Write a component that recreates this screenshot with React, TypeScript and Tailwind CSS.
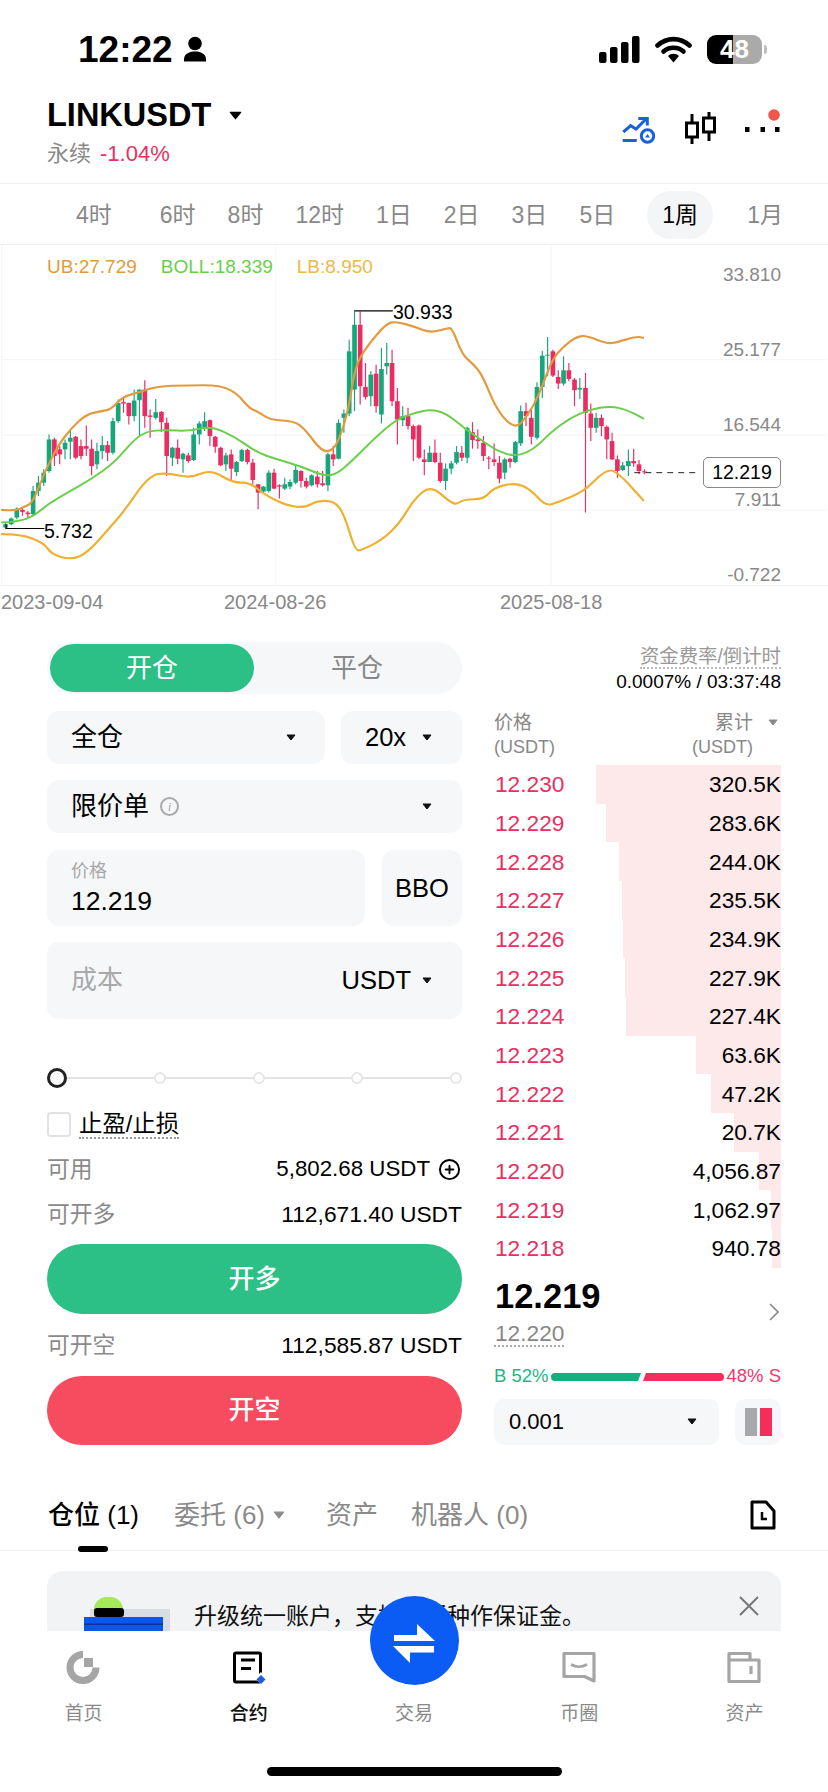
import { CirclePlus } from "lucide-react";

// chart data is in 3x units: x 0-2484, y measured from 240 in the page
type Candle = [number, number, number, number, number, number];

const leftCandles: Candle[] = [
  [13, 850, 870, 855, 865, 1], [30, 835, 858, 838, 855, 1], [47, 805, 840, 808, 835, 1], [64, 805, 830, 812, 818, 0],
  [80, 815, 835, 820, 825, 0], [96, 740, 830, 755, 825, 1], [112, 710, 770, 730, 755, 1], [128, 690, 740, 700, 730, 1],
  [144, 585, 700, 600, 695, 1], [160, 595, 680, 600, 650, 0], [176, 620, 675, 630, 645, 0], [192, 600, 660, 610, 630, 1],
  [208, 575, 660, 595, 607, 1], [224, 590, 660, 592, 655, 0], [240, 600, 660, 620, 650, 0], [256, 558, 650, 620, 628, 0],
  [272, 600, 708, 628, 680, 0], [288, 610, 690, 635, 675, 1], [304, 590, 660, 617, 635, 1], [320, 605, 665, 617, 640, 0],
  [336, 535, 645, 545, 640, 1], [352, 480, 550, 490, 545, 1], [368, 475, 520, 488, 492, 0], [384, 490, 555, 490, 530, 0],
  [400, 450, 545, 483, 530, 1], [416, 450, 590, 450, 482, 1], [432, 422, 565, 450, 530, 0], [448, 510, 595, 528, 532, 0],
  [465, 478, 540, 518, 535, 1], [482, 515, 578, 517, 548, 0], [498, 535, 710, 550, 650, 0], [515, 622, 680, 625, 655, 1],
  [531, 600, 675, 625, 658, 0], [547, 640, 700, 643, 660, 1], [563, 640, 670, 648, 665, 0], [579, 565, 665, 585, 662, 1],
  [596, 545, 615, 552, 585, 1], [612, 518, 575, 545, 568, 1], [628, 540, 620, 542, 590, 0], [644, 590, 640, 592, 622, 0],
  [660, 622, 680, 625, 678, 0], [676, 640, 695, 648, 675, 1], [692, 630, 725, 645, 688, 0], [708, 665, 710, 668, 698, 1],
  [724, 628, 668, 632, 665, 1], [741, 628, 675, 632, 668, 0], [757, 658, 735, 670, 722, 0], [773, 735, 810, 735, 760, 0],
  [789, 740, 760, 742, 757, 1], [805, 693, 760, 700, 755, 1], [821, 688, 750, 700, 748, 0], [837, 735, 778, 738, 742, 0],
  [853, 715, 752, 735, 748, 1], [869, 720, 750, 728, 742, 1], [886, 680, 735, 692, 730, 1], [902, 693, 745, 695, 725, 0],
  [918, 715, 748, 725, 742, 0], [934, 705, 742, 708, 738, 1], [951, 695, 745, 712, 735, 0], [967, 695, 742, 732, 738, 0],
  [983, 640, 755, 645, 738, 1], [999, 620, 680, 645, 660, 0], [1015, 540, 660, 550, 658, 1], [1031, 510, 580, 522, 535, 1],
  [1047, 300, 530, 335, 522, 1], [1063, 215, 515, 255, 450, 1], [1080, 215, 495, 255, 440, 0], [1096, 370, 480, 442, 472, 0],
  [1112, 395, 500, 405, 470, 1], [1128, 375, 520, 402, 500, 0], [1144, 325, 552, 388, 525, 1], [1160, 310, 405, 370, 380, 1],
  [1176, 330, 500, 370, 485, 0], [1192, 445, 615, 485, 540, 0], [1208, 500, 560, 530, 542, 1], [1224, 505, 570, 530, 560, 0],
  [1240, 555, 665, 560, 600, 0],
];

const rightCandles: Candle[] = [
  [15, 555, 660, 558, 655, 0], [31, 630, 708, 660, 668, 0], [47, 620, 668, 640, 668, 1], [63, 600, 672, 640, 668, 0],
  [79, 640, 730, 670, 725, 0], [95, 672, 752, 688, 725, 1], [112, 665, 705, 672, 688, 1], [128, 620, 675, 638, 670, 1],
  [144, 620, 665, 640, 655, 0], [160, 562, 672, 565, 655, 1], [176, 548, 628, 578, 602, 0], [192, 570, 628, 600, 605, 0],
  [209, 590, 665, 610, 650, 0], [225, 650, 690, 655, 658, 0], [241, 612, 680, 660, 668, 0], [257, 650, 732, 670, 718, 0],
  [273, 655, 720, 660, 700, 1], [289, 655, 685, 658, 668, 0], [305, 605, 672, 608, 668, 1], [321, 498, 620, 515, 612, 1],
  [337, 490, 560, 515, 530, 0], [353, 510, 615, 535, 592, 0], [370, 428, 600, 442, 595, 1], [386, 333, 475, 348, 442, 1],
  [402, 292, 410, 345, 348, 1], [418, 330, 412, 335, 408, 0], [434, 392, 448, 412, 432, 0], [450, 350, 438, 392, 432, 1],
  [466, 370, 425, 392, 418, 0], [483, 415, 500, 420, 452, 0], [499, 415, 478, 445, 450, 1], [516, 400, 820, 445, 520, 0],
  [532, 492, 605, 522, 565, 0], [548, 520, 580, 535, 565, 1], [564, 525, 590, 535, 560, 0], [580, 558, 660, 562, 600, 0],
  [596, 580, 662, 605, 660, 0], [612, 648, 715, 660, 695, 0], [628, 668, 695, 678, 692, 1], [645, 630, 710, 665, 680, 1],
  [661, 628, 682, 665, 672, 0], [677, 662, 705, 675, 695, 0], [693, 690, 705, 696, 699, 0],
];

const candles: Candle[] = [...leftCandles, ...rightCandles.map(([x, a, b, c, d, g]) => [x + 1242, a, b, c, d, g] as Candle)];

const shift = (pts: number[][]) => pts.map(([x, y]) => [x + 1242, y]);

// midpoints joined by quadratics, so the bands don't look faceted
const toPath = (pts: number[][]) => {
  let d = `M${pts[0][0]} ${pts[0][1]}`;
  for (let i = 1; i < pts.length - 1; i++) {
    const mx = (pts[i][0] + pts[i + 1][0]) / 2;
    const my = (pts[i][1] + pts[i + 1][1]) / 2;
    d += ` Q${pts[i][0]} ${pts[i][1]} ${mx} ${my}`;
  }
  const last = pts[pts.length - 1];
  return `${d} L${last[0]} ${last[1]}`;
};

const ub = [
  [0, 812], [40, 815], [70, 803], [95, 790], [130, 700], [170, 620], [210, 567], [255, 525], [300, 515], [330, 510],
  [365, 472], [410, 460], [470, 440], [560, 437], [660, 437], [710, 462], [745, 505], [775, 518], [810, 542], [880, 544],
  [915, 570], [965, 638], [1000, 632], [1020, 590], [1045, 510], [1065, 380], [1100, 320], [1160, 250], [1190, 246],
  ...shift([[0, 260], [50, 280], [100, 265], [115, 265], [145, 345], [175, 370], [205, 405], [250, 515], [305, 570], [340, 530],
    [375, 470], [415, 360], [450, 320], [490, 290], [520, 288], [580, 312], [610, 308], [670, 290], [692, 295]]),
];
const boll = [
  [0, 850], [50, 848], [100, 830], [140, 795], [200, 760], [270, 720], [340, 670], [400, 600], [440, 575], [490, 572],
  [570, 575], [630, 560], [700, 590], [770, 640], [830, 660], [900, 680], [970, 710], [1010, 705], [1060, 660], [1130, 590], [1190, 540],
  ...shift([[0, 520], [50, 510], [95, 520], [150, 565], [200, 600], [250, 635], [305, 652], [360, 630], [410, 580], [470, 535],
    [530, 510], [590, 500], [640, 510], [692, 538]]),
];
const lb = [
  [0, 885], [60, 885], [130, 912], [150, 945], [210, 962], [260, 942], [340, 850], [370, 815], [445, 708], [500, 700],
  [570, 717], [630, 690], [695, 730], [750, 730], [790, 765], [860, 800], [915, 805], [950, 785], [1000, 785], [1030, 820],
  [1065, 935], [1085, 933], [1150, 900], [1200, 850],
  ...shift([[0, 780], [50, 738], [110, 790], [130, 795], [150, 780], [210, 780], [240, 745], [305, 730], [350, 750], [395, 800],
    [430, 790], [510, 758], [575, 692], [610, 695], [692, 785]]),
];

const timeframes = ["4时", "6时", "8时", "12时", "1日", "2日", "3日", "5日", "1周", "1月"];

const book = [
  { price: "12.230", total: "320.5K", left: 596 },
  { price: "12.229", total: "283.6K", left: 606 },
  { price: "12.228", total: "244.0K", left: 619 },
  { price: "12.227", total: "235.5K", left: 622 },
  { price: "12.226", total: "234.9K", left: 623 },
  { price: "12.225", total: "227.9K", left: 625 },
  { price: "12.224", total: "227.4K", left: 626 },
  { price: "12.223", total: "63.6K", left: 696 },
  { price: "12.222", total: "47.2K", left: 711 },
  { price: "12.221", total: "20.7K", left: 734 },
  { price: "12.220", total: "4,056.87", left: 759 },
  { price: "12.219", total: "1,062.97", left: 771 },
  { price: "12.218", total: "940.78", left: 772 },
];

function Caret({ color = "#111", w = 10, h = 7 }: { color?: string; w?: number; h?: number }) {
  return (
    <svg width={w} height={h} viewBox="0 0 10 7" className="shrink-0">
      <path d="M1 1 H9 L5 6 Z" fill={color} stroke={color} strokeWidth="1" strokeLinejoin="round" />
    </svg>
  );
}

function StatusBar() {
  return (
    <div className="flex h-[98px] items-center pl-[78px] pr-[66px]">
      <span className="text-[37px] font-bold leading-none text-black">12:22</span>
      <svg width="24" height="26" viewBox="0 0 24 26" className="ml-[10px]">
        <circle cx="12" cy="7.5" r="6.8" fill="#000" />
        <path d="M1 25.5 C0 18 6 15.5 12 15.5 C18 15.5 24 18 23 25.5 Z" fill="#000" />
      </svg>
      <div className="ml-auto flex items-center">
        <svg width="41" height="27" viewBox="0 0 41 27">
          <rect x="0" y="16" width="7.5" height="11" rx="2" fill="#000" />
          <rect x="11" y="11" width="7.5" height="16" rx="2" fill="#000" />
          <rect x="22" y="6" width="7.5" height="21" rx="2" fill="#000" />
          <rect x="33" y="0" width="7.5" height="27" rx="2" fill="#000" />
        </svg>
        <svg width="37" height="27" viewBox="0 0 37 27" className="ml-[15px]">
          <path d="M2.5 9.5 C12 1 25 1 34.5 9.5" fill="none" stroke="#000" strokeWidth="4.6" strokeLinecap="round" />
          <path d="M8.5 15.5 C14 10.5 23 10.5 28.5 15.5" fill="none" stroke="#000" strokeWidth="4.6" strokeLinecap="round" />
          <path d="M13 20 C16 17 21 17 24 20 L18.5 26.5 Z" fill="#000" />
        </svg>
        <div className="relative ml-[15px] flex h-[29px] w-[55px] items-center justify-center rounded-[9px] bg-[linear-gradient(90deg,#000_47%,#aaa_47%)]">
          <span className="text-[26px] font-bold leading-none text-white">48</span>
          <span className="absolute -right-[5px] top-[10px] h-[9px] w-[3px] rounded-r-full bg-[#bbb]" />
        </div>
      </div>
    </div>
  );
}

function Header() {
  return (
    <div className="flex h-[86px] items-start justify-between border-b border-[#f1f1f1] pl-[47px] pr-[46px]">
      <div>
        <div className="flex h-[34px] items-center">
          <span className="text-[32.5px] font-bold leading-none text-black">LINKUSDT</span>
          <span className="ml-[18px]">
            <Caret w={13} h={9} color="#000" />
          </span>
        </div>
        <div className="mt-[7px] flex h-[28px] items-center text-[22px]">
          <span className="text-[#8a8a8a]">永续</span>
          <span className="ml-[9px] text-[#e9305f]">-1.04%</span>
        </div>
      </div>
      <div className="flex items-start pt-[19px]">
        <svg width="35" height="28" viewBox="0 0 35 28" fill="none">
          <path d="M1.3 15 L8.7 8.7 L14 12 L24 2" stroke="#1c5fdc" strokeWidth="3" />
          <path d="M16.3 1.5 H25.3 V8.5" stroke="#1c5fdc" strokeWidth="3" />
          <path d="M0.7 23.5 H14.7" stroke="#1c5fdc" strokeWidth="3" />
          <circle cx="25.5" cy="19" r="6.2" stroke="#1c5fdc" strokeWidth="3" />
          <path d="M23 20.5 L25.5 17 L28 20.5 Z" fill="#1c5fdc" />
        </svg>
        <svg width="32" height="34" viewBox="0 0 32 34" fill="none" className="ml-[28px] -mt-[6px]">
          <path d="M7 3 V33 M24 1 V30" stroke="#000" strokeWidth="3" />
          <rect x="1.5" y="12" width="11" height="14" fill="#fff" stroke="#000" strokeWidth="3" />
          <rect x="18.5" y="7" width="11" height="14" fill="#fff" stroke="#000" strokeWidth="3" />
        </svg>
        <svg width="39" height="26" viewBox="0 0 39 26" className="ml-[26px] -mt-[8px]">
          <rect x="2" y="18" width="4.5" height="5" fill="#000" />
          <rect x="17.5" y="18" width="4.5" height="5" fill="#000" />
          <rect x="32" y="18" width="4.5" height="5" fill="#000" />
          <circle cx="31" cy="6" r="5.8" fill="#f2554c" />
        </svg>
      </div>
    </div>
  );
}

function Timeframes() {
  return (
    <div className="flex h-[61px] items-center gap-[32px] border-b border-[#f1f1f1] pl-[76px] pt-[2px] text-[23px] leading-none text-[#888]">
      {timeframes.map((t, i) =>
        t === "1周" ? (
          <span key={t} className="flex h-[48px] w-[66px] items-center justify-center rounded-full bg-[#f3f5f6] text-black">
            {t}
          </span>
        ) : (
          <span key={t} className={i === 0 ? "mr-[16px]" : i === 9 ? "ml-[2px]" : ""}>
            {t}
          </span>
        ),
      )}
    </div>
  );
}

function Chart() {
  return (
    <div className="relative h-[375px]">
      <svg width="828" height="341" viewBox="0 15 2484 1023" className="block border-b border-[#f1f1f1]">
        {[360, 587, 812].map((y) => (
          <line key={y} x1="0" x2="2484" y1={y} y2={y} stroke="#f3f3f3" strokeWidth="3" />
        ))}
        <line x1="826" x2="826" y1="15" y2="1038" stroke="#f6f6f6" strokeWidth="3" />
        <line x1="1654" x2="1654" y1="15" y2="1038" stroke="#f3f3f3" strokeWidth="3" />
        <line x1="2" x2="2" y1="15" y2="1038" stroke="#f3f3f3" strokeWidth="3" />
        {candles.map(([x, hi, lo, top, bot, up]) => {
          const c = up ? "#17a67b" : "#ea2c62";
          return (
            <g key={x}>
              <line x1={x} x2={x} y1={hi} y2={lo} stroke={c} strokeWidth="3.5" />
              <rect x={x - 7} y={top} width="14" height={Math.max(bot - top, 3)} fill={c} />
            </g>
          );
        })}
        <path d={toPath(ub)} fill="none" stroke="#e39a3e" strokeWidth="6.5" strokeLinejoin="round" />
        <path d={toPath(boll)} fill="none" stroke="#69cf4a" strokeWidth="6" strokeLinejoin="round" />
        <path d={toPath(lb)} fill="none" stroke="#eeb02f" strokeWidth="6.5" strokeLinejoin="round" />
        <path d="M1062 213 H1178" stroke="#000" strokeWidth="3.5" fill="none" />
        <path d="M15 855 V868 H130" stroke="#000" strokeWidth="3.5" fill="none" />
        <line x1="1905" x2="2100" y1="700" y2="700" stroke="#222" strokeWidth="3" strokeDasharray="18 15" />
      </svg>

      <div className="absolute left-[47px] top-[10px] flex h-[22px] items-center gap-[24px] text-[19px] leading-none">
        <span className="text-[#e39a3e]">UB:27.729</span>
        <span className="text-[#69cf4a]">BOLL:18.339</span>
        <span className="text-[#eeb84a]">LB:8.950</span>
      </div>

      <span className="absolute left-[393px] top-[56px] text-[19.5px] leading-[22px] text-black">30.933</span>
      <span className="absolute left-[44px] top-[275px] text-[19.5px] leading-[22px] text-black">5.732</span>

      <span className="absolute right-[47px] top-[19px] text-[19px] leading-[22px] text-[#888]">33.810</span>
      <span className="absolute right-[47px] top-[94px] text-[19px] leading-[22px] text-[#888]">25.177</span>
      <span className="absolute right-[47px] top-[169px] text-[19px] leading-[22px] text-[#888]">16.544</span>
      <span className="absolute right-[47px] top-[244px] text-[19px] leading-[22px] text-[#888]">7.911</span>
      <span className="absolute right-[47px] top-[319px] text-[19px] leading-[22px] text-[#888]">-0.722</span>

      <div className="absolute left-[703px] top-[212px] flex h-[31px] w-[78px] items-center justify-center rounded-[5px] border border-[#888] bg-white text-[19.5px] text-black">
        12.219
      </div>

      <span className="absolute left-[1px] top-[346px] text-[20px] leading-[22px] text-[#888]">2023-09-04</span>
      <span className="absolute left-[224px] top-[346px] text-[20px] leading-[22px] text-[#888]">2024-08-26</span>
      <span className="absolute left-[500px] top-[346px] text-[20px] leading-[22px] text-[#888]">2025-08-18</span>
    </div>
  );
}

function InfoRow({ label, value, children }: { label: string; value: string; children?: React.ReactNode }) {
  return (
    <div className="flex h-[30px] items-center justify-between">
      <span className="text-[22.8px] text-[#8a8a8a]">{label}</span>
      <span className={`flex items-center text-black ${children ? "text-[22.3px]" : "text-[22.8px]"}`}>
        {value}
        {children}
      </span>
    </div>
  );
}

function OrderForm() {
  return (
    <div className="w-[415px] shrink-0">
      <div className="flex h-[52px] rounded-full bg-[#f5f7f8] p-[2px] pl-[3px] text-[26px] leading-none">
        <div className="flex w-[204px] items-center justify-center rounded-full bg-[#2dc086] text-white">开仓</div>
        <div className="flex flex-1 items-center justify-center text-[#888]">平仓</div>
      </div>

      <div className="mt-[17px] flex gap-[16px]">
        <div className="flex h-[53px] w-[278px] items-center justify-between rounded-[12px] bg-[#f5f7f8] pl-[24px] pr-[29px] text-[26px] text-black">
          全仓
          <Caret />
        </div>
        <div className="flex h-[53px] flex-1 items-center justify-between rounded-[12px] bg-[#f5f7f8] pl-[24px] pr-[30px] text-[25.5px] text-black">
          20x
          <Caret />
        </div>
      </div>

      <div className="mt-[16px] flex h-[53px] items-center rounded-[12px] bg-[#f5f7f8] pl-[24px] pr-[30px] text-[26px] text-black">
        限价单
        <span className="ml-[11px] flex h-[19px] w-[19px] items-center justify-center rounded-full border-2 border-[#aaa] font-['Liberation_Serif',serif] text-[13px] italic leading-none text-[#aaa]">
          i
        </span>
        <span className="ml-auto">
          <Caret />
        </span>
      </div>

      <div className="mt-[17px] flex gap-[17px]">
        <div className="flex h-[76px] w-[318px] flex-col justify-center rounded-[12px] bg-[#f5f7f8] pl-[24px]">
          <span className="text-[18px] leading-[22px] text-[#a8a8a8]">价格</span>
          <span className="mt-[4px] text-[26.5px] leading-[30px] text-black">12.219</span>
        </div>
        <div className="flex h-[76px] flex-1 items-center justify-center rounded-[12px] bg-[#f5f7f8] text-[25.5px] text-black">BBO</div>
      </div>

      <div className="mt-[16px] flex h-[77px] items-center justify-between rounded-[12px] bg-[#f5f7f8] pl-[24px] pr-[30px]">
        <span className="text-[26px] text-[#a8a8a8]">成本</span>
        <span className="flex items-center gap-[11px] text-[25.5px] text-black">
          USDT
          <Caret />
        </span>
      </div>

      <div className="relative mt-[50px] flex h-[18px] items-center justify-between">
        <div className="absolute left-[10px] right-[5px] top-[8px] h-[2px] bg-[#e3e3e3]" />
        <span className="relative h-[20px] w-[20px] rounded-full border-[3px] border-[#222] bg-white" />
        {[0, 1, 2, 3].map((i) => (
          <span key={i} className="relative h-[12px] w-[12px] rounded-full border-2 border-[#e5e5e5] bg-white" />
        ))}
      </div>

      <div className="mt-[25px] flex h-[25px] items-center">
        <span className="h-[25px] w-[24px] rounded-[4px] border-2 border-[#e2e2e2]" />
        <span className="ml-[8px] border-b-2 border-dotted border-[#999] text-[23.4px] leading-[26px] text-black">止盈/止损</span>
      </div>

      <div className="mt-[17px]">
        <InfoRow label="可用" value="5,802.68 USDT">
          <CirclePlus size={23} strokeWidth={2} className="ml-[8px] mr-[1px]" />
        </InfoRow>
      </div>
      <div className="mt-[15px]">
        <InfoRow label="可开多" value="112,671.40 USDT" />
      </div>
      <div className="mt-[15px] flex h-[70px] items-center justify-center rounded-full bg-[#2dc086] text-[26px] font-medium text-white">开多</div>
      <div className="mt-[16px]">
        <InfoRow label="可开空" value="112,585.87 USDT" />
      </div>
      <div className="mt-[16px] flex h-[69px] items-center justify-center rounded-full bg-[#f74b60] text-[26px] font-medium text-white">开空</div>
    </div>
  );
}

function OrderBook() {
  return (
    <div className="ml-[32px] w-[287px] shrink-0">
      <div className="mt-[4px] flex flex-col items-end">
        <span className="border-b-2 border-dotted border-[#bbb] text-[19.4px] leading-[21px] text-[#999]">资金费率/倒计时</span>
        <span className="mt-[2px] text-[19px] leading-[22px] text-black">0.0007% / 03:37:48</span>
      </div>

      <div className="mt-[18px] flex justify-between text-[#888]">
        <div>
          <div className="text-[19px] leading-[24px]">价格</div>
          <div className="text-[18px] leading-[24px]">(USDT)</div>
        </div>
        <div className="flex flex-col items-end pr-[28px]">
          <div className="relative text-[19px] leading-[24px]">
            累计
            <span className="absolute -right-[25px] top-[8px]">
              <Caret color="#888" />
            </span>
          </div>
          <div className="text-[18px] leading-[24px]">(USDT)</div>
        </div>
      </div>

      <div className="mt-[6px]">
        {book.map((row) => (
          <div key={row.price} className="relative flex h-[38.67px] items-center justify-between text-[22.7px]">
            <span className="absolute bottom-0 right-0 top-0 bg-[#fde8ea]" style={{ width: 781 - row.left }} />
            <span className="relative pl-[1px] text-[#e9305f]">{row.price}</span>
            <span className="relative text-black">{row.total}</span>
          </div>
        ))}
      </div>

      <div className="relative mt-[8px]">
        <div className="pl-[1px] text-[34.5px] font-bold leading-[40px] text-black">12.219</div>
        <div className="mt-[5px]">
          <span className="inline-block border-b-2 border-dotted border-[#aaa] pl-[1px] text-[22.7px] leading-[24px] text-[#888]">12.220</span>
        </div>
        <svg width="10" height="18" viewBox="0 0 10 18" fill="none" className="absolute right-[2px] top-[27px]">
          <path d="M1 1 L9 9 L1 17" stroke="#888" strokeWidth="1.6" />
        </svg>
      </div>

      <div className="mt-[18px] flex h-[22px] items-center justify-between whitespace-nowrap text-[18.5px] leading-none">
        <span className="text-[#1fb586]">B 52%</span>
        <svg width="173" height="8" viewBox="0 0 173 8" className="shrink-0">
          <path d="M4 0 H90 L87 8 H4 A4 4 0 0 1 4 0 Z" fill="#14ae7f" />
          <path d="M95 0 H169 A4 4 0 0 1 169 8 H92 Z" fill="#f42d5c" />
        </svg>
        <span className="text-[#f0386b]">48% S</span>
      </div>

      <div className="mt-[11px] flex gap-[16px]">
        <div className="flex h-[46px] w-[225px] items-center justify-between rounded-[10px] bg-[#f5f7f8] pl-[15px] pr-[22px] text-[22px] text-black">
          0.001
          <Caret />
        </div>
        <div className="flex h-[46px] flex-1 items-center justify-center gap-[3px] rounded-[10px] bg-[#f5f7f8]">
          <span className="h-[28px] w-[12px] bg-[#a6a8ab]" />
          <span className="h-[28px] w-[12px] bg-[#f42d5c]" />
        </div>
      </div>
    </div>
  );
}

function PositionTabs() {
  return (
    <div className="mt-[45px] flex h-[61px] items-center border-b border-[#f1f1f1] pb-[11px] pl-[48px] pr-[52px] text-[26px] leading-none text-[#8a8a8a]">
      <span className="relative font-medium text-black">
        仓位 (1)
        <span className="absolute -bottom-[24px] left-[30px] h-[6px] w-[30px] rounded-full bg-black" />
      </span>
      <span className="ml-[35px]">委托 (6)</span>
      <span className="ml-[8px]">
        <Caret color="#8a8a8a" w={12} h={8} />
      </span>
      <span className="ml-[41px]">资产</span>
      <span className="ml-[33px]">机器人 (0)</span>
      <svg width="26" height="30" viewBox="0 0 26 30" fill="none" className="ml-auto">
        <path d="M2 2 H16 L24 11 V28 H2 Z" stroke="#000" strokeWidth="3" strokeLinejoin="round" />
        <path d="M12 12 V19 H17" stroke="#000" strokeWidth="2.5" />
      </svg>
    </div>
  );
}

function Banner() {
  return (
    <div className="mx-[47px] mt-[20px] flex h-[100px] items-start rounded-[16px] bg-[#f2f3f5] pl-[37px] pr-[22px] pt-[26px]">
      <svg width="88" height="34" viewBox="0 0 88 34" className="shrink-0">
        <rect x="6" y="12" width="80" height="22" fill="#d8dde3" />
        <path d="M10 12 A14 12 0 0 1 39 12 V14 H10 Z" fill="#a3e95a" />
        <rect x="10" y="11" width="30" height="9" rx="3" fill="#000" />
        <rect x="0" y="20" width="79" height="14" fill="#0c56e8" />
        <rect x="0" y="26.5" width="79" height="1.5" fill="#07339a" />
      </svg>
      <span className="ml-[22px] text-[23px] leading-[38px] text-[#111]">升级统一账户，支持多币种作保证金。</span>
      <svg width="20" height="20" viewBox="0 0 20 20" fill="none" className="ml-auto -mt-[1px]">
        <path d="M1 1 L19 19 M19 1 L1 19" stroke="#777" strokeWidth="2" />
      </svg>
    </div>
  );
}

function BottomNav() {
  return (
    <div className="absolute bottom-0 left-0 right-0 z-10 h-[161px] bg-white">
      <div className="absolute left-[370px] -top-[35px] flex h-[89px] w-[89px] items-center justify-center rounded-full bg-[#0a5cf5]">
        <svg width="44" height="44" viewBox="0 0 44 44">
          <path d="M1 16 H24 V5 L42 22 H1 Z" fill="#fff" />
          <path d="M0 27 H41 V33.5 H17 V44 Z" fill="#fff" />
        </svg>
      </div>
      <div className="grid grid-cols-5 px-[1px] pt-[18px] text-[19px] leading-none text-[#8a8a8a]">
        <div className="flex flex-col items-center">
          <svg width="36" height="36" viewBox="0 0 36 36" fill="none">
            <path d="M17 5.5 A13 13 0 1 0 30 18.5" stroke="#a5a5a5" strokeWidth="7" />
            <rect x="18" y="9" width="9" height="9" fill="#a5a5a5" />
          </svg>
          <span className="mt-[19px]">首页</span>
        </div>
        <div className="flex flex-col items-center font-medium text-[#111]">
          <svg width="36" height="36" viewBox="0 0 36 36" fill="none">
            <rect x="3.5" y="4" width="26" height="29" rx="1.5" stroke="#000" strokeWidth="3" />
            <path d="M10 11 H24 M10 19.5 H20" stroke="#000" strokeWidth="3" />
            <path d="M30 23 L36 29 L30 35 L24 29 Z" fill="#fff" />
            <path d="M30 26 L34.5 30.5 L30 35 L25.5 30.5 Z" fill="#1c5fdc" />
          </svg>
          <span className="mt-[19px]">合约</span>
        </div>
        <div className="flex flex-col items-center">
          <div className="h-[36px]" />
          <span className="mt-[19px]">交易</span>
        </div>
        <div className="flex flex-col items-center">
          <svg width="36" height="36" viewBox="0 0 36 36" fill="none">
            <path d="M3 4.5 H33 V32 L23.5 27.5 H3 Z" stroke="#a5a5a5" strokeWidth="3.2" strokeLinejoin="round" />
            <path d="M10 15.5 Q18 20 26 15.5" stroke="#a5a5a5" strokeWidth="2.6" />
          </svg>
          <span className="mt-[19px]">币圈</span>
        </div>
        <div className="flex flex-col items-center">
          <svg width="36" height="36" viewBox="0 0 36 36" fill="none">
            <path d="M3 11 V4.5 H24 V11" stroke="#a5a5a5" strokeWidth="3.2" strokeLinejoin="round" />
            <rect x="3" y="11" width="30" height="21.5" stroke="#a5a5a5" strokeWidth="3.2" strokeLinejoin="round" />
            <path d="M25 17 V25" stroke="#a5a5a5" strokeWidth="3.2" />
          </svg>
          <span className="mt-[19px]">资产</span>
        </div>
      </div>
      <div className="absolute bottom-[16px] left-[267px] h-[9px] w-[295px] rounded-full bg-black" />
    </div>
  );
}

export default function App() {
  return (
    <div className="relative h-[1792px] w-[828px] overflow-hidden bg-white [font-family:'Liberation_Sans','Noto_Sans_CJK_SC',sans-serif]">
      <StatusBar />
      <Header />
      <Timeframes />
      <Chart />
      <div className="flex pl-[47px] pt-[22px]">
        <OrderForm />
        <OrderBook />
      </div>
      <PositionTabs />
      <Banner />
      <BottomNav />
    </div>
  );
}
